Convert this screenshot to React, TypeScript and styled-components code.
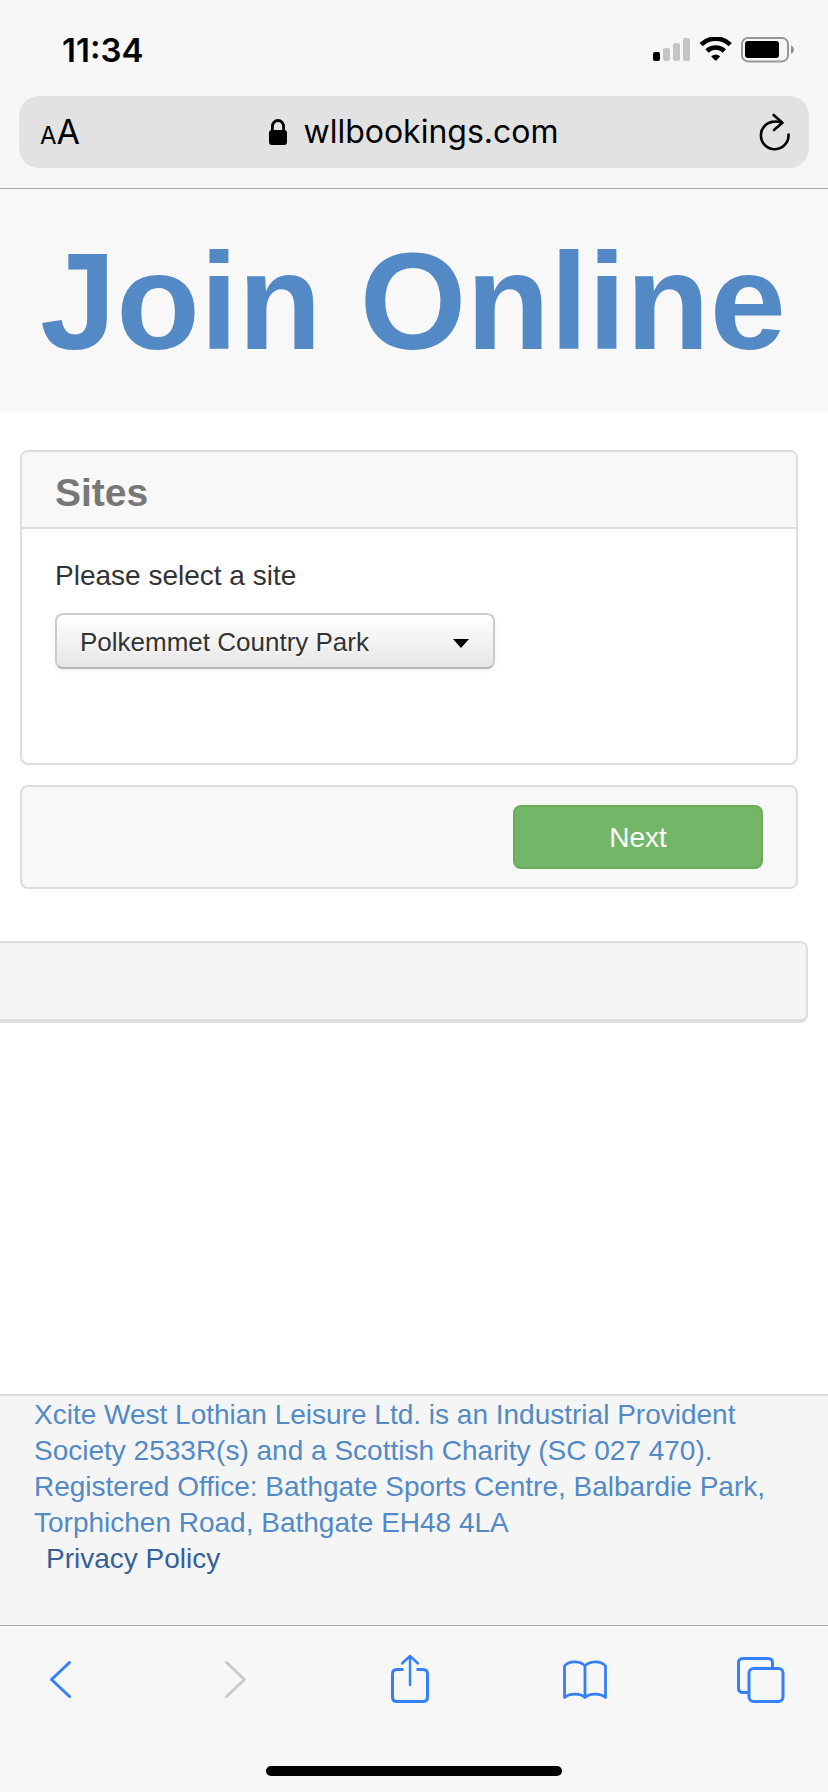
import React from "react";
import styled, { createGlobalStyle } from "styled-components";

const GlobalStyle = createGlobalStyle`
  *, *::before, *::after { box-sizing: border-box; }
  body {
    margin: 0;
    background: #ffffff;
    color: #333333;
    font-family: "Liberation Sans", Arial, sans-serif;
  }
`;

const Screen = styled.div`
  display: flex;
  flex-direction: column;
  min-height: 100vh;
`;

const BrowserTop = styled.header`
  background: #f7f7f7;
  border-bottom: 1px solid #acacac;
  padding-bottom: 20px;
  color: #000000;
  font-family: Inter, sans-serif;
`;

const StatusBar = styled.div`
  display: flex;
  align-items: center;
  justify-content: space-between;
  height: 96px;
  padding: 4px 33px 0 62px;
`;

const Clock = styled.time`
  font-size: 33px;
  line-height: 40px;
  font-weight: 600;
`;

const StatusIcons = styled.svg`
  display: block;
  width: 142px;
  height: 26px;
`;

const AddressBar = styled.div`
  display: grid;
  grid-template-columns: 1fr auto 1fr;
  align-items: center;
  height: 72px;
  margin: 0 19px;
  padding: 0 18px;
  border-radius: 20px;
  background: #e2e2e2;
`;

const PlainButton = styled.button`
  display: flex;
  align-items: center;
  justify-content: center;
  padding: 0;
  border: 0;
  background: none;
  color: inherit;
  font: inherit;
`;

const TextSizeButton = styled(PlainButton)`
  align-items: baseline;
  justify-self: start;
  padding: 4px 0 0 3px;
  font-size: 34px;
  line-height: 40px;
`;

const SmallLetter = styled.span`
  font-size: 24px;
`;

const ReloadButton = styled(PlainButton)`
  justify-self: end;
`;

const Address = styled.div`
  display: flex;
  align-items: center;
  gap: 15px;
  font-size: 32px;
  line-height: 40px;
`;

const Banner = styled.div`
  background: #f8f8f8;
`;

const BannerTitle = styled.h1`
  margin: 0;
  padding: 1px 0 0 40px;
  color: #538ac6;
  font-size: 137px;
  line-height: 223px;
  font-weight: 700;
  white-space: nowrap;
`;

const Content = styled.main`
  flex: 1;
  padding: 37px 0 40px;
`;

const Panel = styled.section`
  margin: 0 30px 20px 20px;
  border: 2px solid #dddddd;
  border-radius: 8px;
  overflow: hidden;
`;

const PanelTitle = styled.h2`
  margin: 0;
  padding: 7px 33px 0;
  border-bottom: 2px solid #dddddd;
  background: #f8f8f8;
  color: #777777;
  font-size: 39px;
  line-height: 68px;
  font-weight: 700;
`;

const PanelBody = styled.div`
  padding: 29px 33px 94px;
`;

const FieldLabel = styled.label`
  display: block;
  margin-bottom: 19px;
  font-size: 28px;
  line-height: 36px;
`;

const SelectBox = styled.div`
  position: relative;
  max-width: 440px;
`;

const Select = styled.select`
  display: block;
  appearance: none;
  width: 100%;
  height: 56px;
  margin: 0;
  padding: 2px 60px 0 23px;
  border: 2px solid #cccccc;
  border-bottom-color: #b3b3b3;
  border-radius: 8px;
  background: linear-gradient(#ffffff, #e6e6e6);
  box-shadow: 0 2px 4px rgba(0, 0, 0, 0.06);
  color: #333333;
  font-family: inherit;
  font-size: 26px;
  text-shadow: 0 2px 2px rgba(255, 255, 255, 0.75);
`;

const SelectArrow = styled.svg`
  position: absolute;
  top: 26px;
  right: 26px;
  width: 16px;
  height: 9px;
  pointer-events: none;
`;

const ActionPanel = styled(Panel)`
  display: flex;
  justify-content: flex-end;
  margin-bottom: 52px;
  padding: 18px 33px;
  background: #f8f8f8;
`;

const NextButton = styled.button`
  width: 250px;
  height: 64px;
  padding: 2px 0 0;
  border: 2px solid #69ad5b;
  border-radius: 8px;
  background: #74b667;
  color: #ffffff;
  font-family: inherit;
  font-size: 28px;
`;

const Band = styled.div`
  height: 82px;
  margin-right: 20px;
  border: 2px solid #dddddd;
  border-width: 2px 2px 4px 0;
  border-radius: 0 8px 8px 0;
  background: #f4f4f4;
`;

const PageFooter = styled.footer`
  padding: 1px 34px 48px;
  border-top: 2px solid #dddddd;
  background: #f5f5f5;
  color: #538ac6;
  font-size: 28px;
  line-height: 36px;
`;

const FooterText = styled.p`
  margin: 0;
`;

const PolicyLink = styled.a`
  margin-left: 12px;
  color: #356196;
  text-decoration: none;
`;

const BrowserBottom = styled.div`
  border-top: 1px solid #acacac;
  background: #f7f7f7;
  padding-bottom: 16px;
`;

const Toolbar = styled.nav`
  display: flex;
  justify-content: space-between;
  padding: 23px 38px 57px 30px;
`;

const ToolButton = styled(PlainButton)`
  width: 60px;
  height: 60px;
  color: #3480fb;

  &:disabled {
    color: #cacaca;
  }
`;

const ToolIcon = styled.svg`
  display: block;
  width: 60px;
  height: 60px;
  fill: none;
  stroke: currentColor;
  stroke-width: 3;
  stroke-linecap: round;
  stroke-linejoin: round;
`;

const HomeIndicator = styled.div`
  width: 296px;
  height: 10px;
  margin: 0 auto;
  border-radius: 5px;
  background: #000000;
`;

type ToolProps = { label: string; disabled?: boolean; children: React.ReactNode };

function Tool({ label, disabled, children }: ToolProps) {
  return (
    <ToolButton type="button" aria-label={label} disabled={disabled}>
      <ToolIcon viewBox="0 0 60 60" aria-hidden="true">
        {children}
      </ToolIcon>
    </ToolButton>
  );
}

export default function App() {
  return (
    <Screen>
      <GlobalStyle />
      <BrowserTop>
        <StatusBar>
          <Clock>11:34</Clock>
          <StatusIcons viewBox="0 0 142 26" aria-hidden="true">
            <rect x="0" y="15" width="7" height="9" rx="2" />
            <g fill="#c5c5c5">
              <rect x="10" y="11" width="7" height="13" rx="2" />
              <rect x="20" y="6" width="7" height="18" rx="2" />
              <rect x="30" y="1" width="7" height="23" rx="2" />
            </g>
            <g fill="none" stroke="#000000">
              <path d="M48.2 7.6 A20.5 20.5 0 0 1 77.2 7.6" strokeWidth="4.6" />
              <path d="M54 14 A12.6 12.6 0 0 1 71.4 14" strokeWidth="4.6" />
            </g>
            <path d="M58.2 19.2 Q62.7 16 67.2 19.2 L63.6 23.2 Q62.7 24 61.8 23.2 Z" />
            <rect x="89" y="1" width="46" height="23.4" rx="6" fill="none" stroke="#989898" strokeWidth="2" />
            <rect x="92" y="4" width="34" height="17" rx="3" />
            <path d="M138 8.5 Q141 9.8 141 12.7 Q141 15.6 138 17 Z" fill="#8f8f8f" />
          </StatusIcons>
        </StatusBar>
        <AddressBar>
          <TextSizeButton type="button" aria-label="Text size">
            <SmallLetter>A</SmallLetter>A
          </TextSizeButton>
          <Address>
            <svg width="19" height="26" viewBox="0 0 19 26" aria-hidden="true">
              <rect x="0" y="11" width="18" height="15" rx="3" />
              <path d="M3.4 12 V7.5 a5.6 6 0 0 1 11.2 0 V12" fill="none" stroke="#000000" strokeWidth="2.8" />
            </svg>
            <span>wllbookings.com</span>
          </Address>
          <ReloadButton type="button" aria-label="Reload">
            <svg
              width="32"
              height="42"
              viewBox="0 0 32 42"
              fill="none"
              stroke="#000000"
              strokeWidth="2.6"
              strokeLinecap="round"
              strokeLinejoin="round"
              aria-hidden="true"
            >
              <path d="M29.5 23.6 A13.8 13.8 0 1 1 15.7 10.6 Q19 10.4 23 11.8" />
              <path d="M14.6 4 L23.4 11.8 L15 19" />
            </svg>
          </ReloadButton>
        </AddressBar>
      </BrowserTop>

      <Banner>
        <BannerTitle>Join Online</BannerTitle>
      </Banner>

      <Content>
        <Panel>
          <PanelTitle>Sites</PanelTitle>
          <PanelBody>
            <FieldLabel htmlFor="site">Please select a site</FieldLabel>
            <SelectBox>
              <Select id="site" defaultValue="polkemmet">
                <option value="polkemmet">Polkemmet Country Park</option>
              </Select>
              <SelectArrow viewBox="0 0 16 9" aria-hidden="true">
                <path d="M0 0 H16 L8 9 Z" />
              </SelectArrow>
            </SelectBox>
          </PanelBody>
        </Panel>
        <ActionPanel>
          <NextButton type="button">Next</NextButton>
        </ActionPanel>
        <Band />
      </Content>

      <PageFooter>
        <FooterText>
          Xcite West Lothian Leisure Ltd. is an Industrial Provident Society 2533R(s) and a Scottish
          Charity (SC 027 470). Registered Office: Bathgate Sports Centre, Balbardie Park, Torphichen
          Road, Bathgate EH48 4LA
        </FooterText>
        <PolicyLink href="#privacy">Privacy Policy</PolicyLink>
      </PageFooter>

      <BrowserBottom>
        <Toolbar aria-label="Browser">
          <Tool label="Back">
            <path d="M39.5 13.5 L21.5 30.5 L39.5 47.5" />
          </Tool>
          <Tool label="Forward" disabled>
            <path d="M21.5 13.5 L39.5 30.5 L21.5 47.5" />
          </Tool>
          <Tool label="Share">
            <path
              d="M23.5 20.5 H17 Q12.5 20.5 12.5 25 V48 Q12.5 52.5 17 52.5 H43 Q47.5 52.5 47.5 48 V25 Q47.5 20.5 43 20.5 H36.5"
              strokeLinecap="butt"
            />
            <path d="M30 36 V7.5 M22 14.5 L30 7 L38 14.5" strokeWidth="2.4" />
          </Tool>
          <Tool label="Bookmarks">
            <path
              d="M30 17 C26 12 14 11 9.5 17 V48.5 C14 44 26 44 30 48.5 C34 44 46 44 50.5 48.5 V17 C46 11 34 12 30 17 V48.5"
              strokeWidth="2.8"
            />
          </Tool>
          <Tool label="Tabs">
            <path
              d="M18 43.5 H13 Q8.5 43.5 8.5 39 V14 Q8.5 9.5 13 9.5 H38 Q42.5 9.5 42.5 14 V19"
              strokeLinecap="butt"
            />
            <rect x="19" y="19.5" width="34" height="33" rx="4.5" />
          </Tool>
        </Toolbar>
        <HomeIndicator />
      </BrowserBottom>
    </Screen>
  );
}
